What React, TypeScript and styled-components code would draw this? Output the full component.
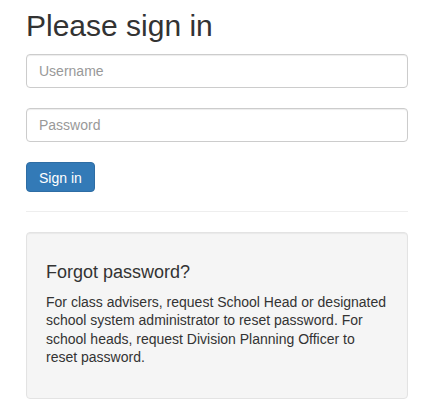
import React from "react";
import styled, { createGlobalStyle } from "styled-components";

const GlobalStyle = createGlobalStyle`
	* {
		box-sizing: border-box;
	}

	body {
		margin: 0;
		background: #fff;
		color: #333;
		font-family: "Liberation Sans", Arial, sans-serif;
		font-size: 14px;
	}
`;

const Page = styled.main`
	width: 382px;
	margin-left: 26px;
	padding-top: 9px;
`;

const Heading = styled.h2`
	margin: 0 0 12px;
	font-size: 30px;
	line-height: 33px;
	font-weight: 400;
	color: #333;
`;

const Form = styled.form`
	display: flex;
	flex-direction: column;
	align-items: flex-start;
	gap: 20px;
`;

const Input = styled.input`
	display: block;
	width: 100%;
	height: 34px;
	padding: 6px 12px;
	font-family: inherit;
	font-size: 14px;
	color: #555;
	background: #fff;
	border: 1px solid #ccc;
	border-radius: 4px;
	box-shadow: inset 0 1px 1px rgba(0, 0, 0, 0.075);
	outline: none;

	&::placeholder {
		color: #999;
	}
`;

const Button = styled.button`
	height: 30px;
	padding: 5px 12px;
	font-family: inherit;
	font-size: 14px;
	line-height: 20px;
	color: #fff;
	background: #337ab7;
	border: 1px solid #2e6da4;
	border-radius: 4px;
	cursor: pointer;
`;

const Divider = styled.hr`
	margin: 19px 0 20px;
	border: 0;
	border-top: 1px solid #eee;
`;

const Well = styled.section`
	min-height: 167px;
	padding: 19px;
	background: #f5f5f5;
	border: 1px solid #e3e3e3;
	border-radius: 4px;
	box-shadow: inset 0 1px 1px rgba(0, 0, 0, 0.05);

	h4 {
		margin: 11px 0 10px;
		font-size: 18px;
		line-height: 19.8px;
		font-weight: 400;
		color: #333;
	}

	p {
		margin: 0 0 10px;
		line-height: 18.5px;
		color: #333;
	}
`;

export default function App() {
	return (
		<>
			<GlobalStyle />
			<Page>
				<Heading>Please sign in</Heading>
				<Form onSubmit={(e) => e.preventDefault()}>
					<Input type="text" placeholder="Username" />
					<Input type="password" placeholder="Password" />
					<Button type="submit">Sign in</Button>
				</Form>
				<Divider />
				<Well>
					<h4>Forgot password?</h4>
					<p>
						For class advisers, request School Head or designated school system
						administrator to reset password. For school heads, request Division
						Planning Officer to reset password.
					</p>
				</Well>
			</Page>
		</>
	);
}
